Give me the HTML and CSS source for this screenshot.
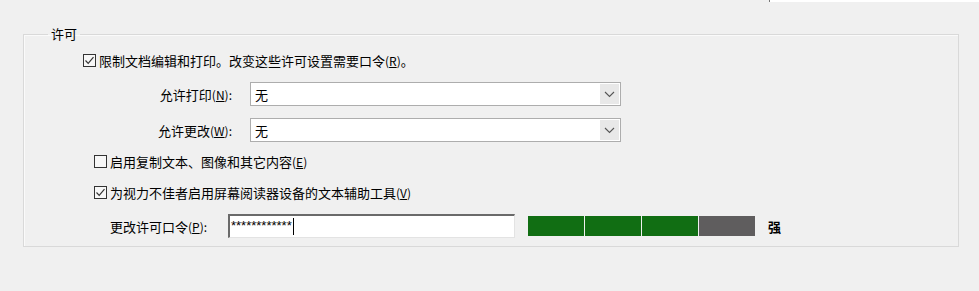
FILE: index.html
```html
<!DOCTYPE html>
<html lang="zh-CN">

<head>
    <meta charset="UTF-8">
    <meta name="viewport" content="width=device-width, initial-scale=1.0">
    <link rel="stylesheet" href="styles.css">
</head>

<body>
    <div class="top-strip"><div class="strip-white"></div></div>

    <fieldset class="perm-group">
        <legend class="perm-legend">许可</legend>

        <div class="row check-row first-check">
            <span class="check-box">
                <svg width="13" height="13" viewBox="0 0 13 13"><polyline points="2.5,6.5 5.2,9.3 10.5,3.2" fill="none" stroke="#333" stroke-width="1.2"/></svg>
            </span>
            <span class="check-label">限制文档编辑和打印。改变这些许可设置需要口令<span class="key">(<u>R</u>)</span>。</span>
        </div>

        <div class="row select-row row-print">
            <span class="field-label">允许打印<span class="key">(<u>N</u>):</span></span>
            <div class="combo">
                <span class="combo-value">无</span>
                <span class="combo-arrow">
                    <svg width="11" height="7" viewBox="0 0 11 7"><polyline points="1,1 5.5,5.5 10,1" fill="none" stroke="#555" stroke-width="1.1"/></svg>
                </span>
            </div>
        </div>

        <div class="row select-row row-change">
            <span class="field-label">允许更改<span class="key">(<u>W</u>):</span></span>
            <div class="combo">
                <span class="combo-value">无</span>
                <span class="combo-arrow">
                    <svg width="11" height="7" viewBox="0 0 11 7"><polyline points="1,1 5.5,5.5 10,1" fill="none" stroke="#555" stroke-width="1.1"/></svg>
                </span>
            </div>
        </div>

        <div class="row check-row sub-check row-copy">
            <span class="check-box"></span>
            <span class="check-label">启用复制文本、图像和其它内容<span class="key">(<u>E</u>)</span></span>
        </div>

        <div class="row check-row sub-check row-reader">
            <span class="check-box">
                <svg width="13" height="13" viewBox="0 0 13 13"><polyline points="2.5,6.5 5.2,9.3 10.5,3.2" fill="none" stroke="#333" stroke-width="1.2"/></svg>
            </span>
            <span class="check-label">为视力不佳者启用屏幕阅读器设备的文本辅助工具<span class="key">(<u>V</u>)</span></span>
        </div>

        <div class="row pass-row">
            <span class="pass-label">更改许可口令<span class="key">(<u>P</u>):</span></span>
            <div class="pass-input"><span class="pass-stars">************</span><span class="caret"></span></div>
            <div class="strength">
                <span class="bar on"></span>
                <span class="bar on"></span>
                <span class="bar on"></span>
                <span class="bar off"></span>
            </div>
            <span class="strength-text">强</span>
        </div>
    </fieldset>
</body>

</html>
```

FILE: styles.css
```css
        html,
        body {
            margin: 0;
            padding: 0;
            background: #f0f0f0;
            width: 979px;
            height: 291px;
            overflow: hidden;
        }

        body {
            font-family: "Noto Sans CJK SC", "Microsoft YaHei", sans-serif;
            font-size: 13px;
            color: #000;
        }

        .top-strip {
            height: 2px;
            display: flex;
            justify-content: flex-end;
        }

        .strip-white {
            width: 209px;
            height: 2px;
            background: #fff;
            border-left: 1px solid #777;
        }

        .perm-group {
            margin: 24px 20px 0 23px;
            padding: 0 0 8px 0;
            border: 1px solid #d9d9d9;
            box-shadow: inset 1px 1px 0 #fafafa;
            min-width: 0;
        }

        .perm-legend {
            margin-left: 24px;
            padding: 0 3px;
            line-height: 16px;
        }

        .row {
            display: flex;
            align-items: center;
        }

        .key {
            font-size: 12px;
        }

        /* checkboxes */
        .check-row {
            height: 20px;
        }

        .first-check {
            margin-top: 8px;
            padding-left: 59px;
        }

        .sub-check {
            padding-left: 70px;
        }

        .row-copy {
            margin-top: 9px;
        }

        .row-reader {
            margin-top: 11px;
        }

        .check-box {
            width: 11px;
            height: 11px;
            border: 1px solid #333;
            background: #f7f7f7;
            margin-right: 3px;
        }

        .check-box svg {
            display: block;
            margin: -1px 0 0 -1px;
        }

        /* combos */
        .select-row {
            height: 24px;
        }

        .row-print {
            margin-top: 12px;
        }

        .row-change {
            margin-top: 12px;
        }

        .field-label {
            width: 208px;
            text-align: right;
            margin-right: 18px;
        }

        .combo {
            width: 369px;
            height: 22px;
            border: 1px solid #adadad;
            background: #fff;
            display: flex;
            align-items: center;
        }

        .combo-value {
            flex: 1;
            padding-left: 4px;
        }

        .combo-arrow {
            width: 19px;
            height: 20px;
            margin-right: 1px;
            background: #e8e8e8;
            display: flex;
            align-items: center;
            justify-content: center;
        }

        .combo-arrow svg {
            display: block;
        }

        /* password */
        .pass-row {
            margin-top: 12px;
            height: 24px;
            padding-left: 86px;
        }

        .pass-label {
            width: 118px;
        }

        .pass-input {
            width: 284px;
            height: 21px;
            border-top: 2px solid #6a6a6a;
            border-left: 2px solid #6a6a6a;
            border-right: 1px solid #e3e3e3;
            border-bottom: 1px solid #e3e3e3;
            background: #fff;
            display: flex;
            align-items: center;
        }

        .pass-stars {
            font-family: "Liberation Sans", sans-serif;
            font-size: 13px;
            padding-left: 1px;
            line-height: 12px;
            height: 12px;
            margin-top: -2px;
        }

        .caret {
            width: 1px;
            height: 17px;
            background: #000;
            margin-left: 1px;
        }

        .strength {
            display: flex;
            gap: 1px;
            margin-left: 13px;
        }

        .bar {
            width: 56px;
            height: 20px;
        }

        .bar.on {
            background: #116e13;
        }

        .bar.off {
            background: #5f5d5e;
        }

        .strength-text {
            margin-left: 13px;
            font-weight: bold;
        }
```
